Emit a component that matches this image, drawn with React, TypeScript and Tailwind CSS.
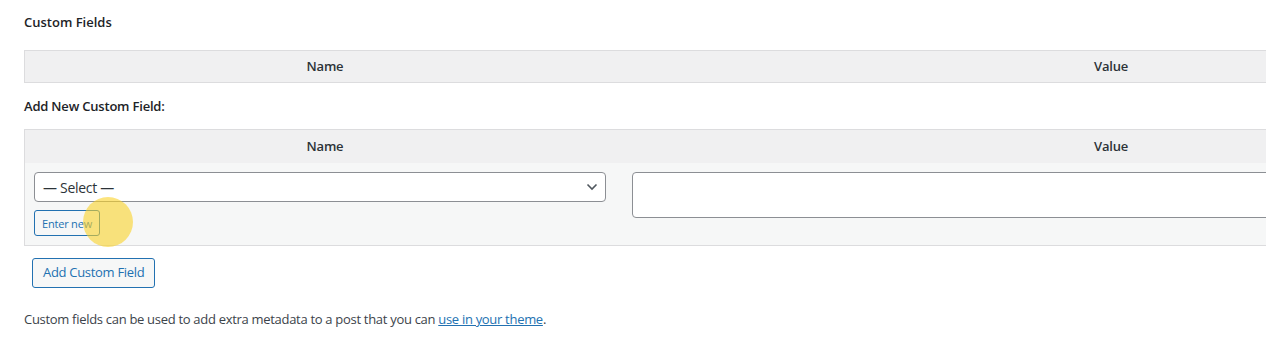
import React from "react";

export default function App() {
  return (
    <div className="w-[1266px] h-[353px] overflow-hidden bg-white text-[13px] text-[#3c434a]" style={{ fontFamily: '"Open Sans", "Noto Sans", sans-serif' }}>
      <div className="pl-6 pt-[13px]">
        <h2 className="text-[13px] font-semibold text-[#1d2327] leading-[18px]">Custom Fields</h2>
        <div className="mt-[19px] w-[1574px] border border-[#dcdcde] bg-[#f0f0f1] flex h-[33px] items-center font-semibold text-[#2c3338] tracking-[-0.2px]">
          <div className="w-[600px] text-center">Name</div>
          <div className="flex-1 text-center">Value</div>
        </div>
        <p className="mt-[14px] font-semibold text-[#1d2327] leading-[18px] tracking-[-0.2px]">Add New Custom Field:</p>
        <div className="mt-[14px] w-[1574px] border border-[#dcdcde]">
          <div className="bg-[#f0f0f1] flex h-[33px] items-center font-semibold text-[#2c3338] tracking-[-0.2px]">
            <div className="w-[600px] text-center">Name</div>
            <div className="flex-1 text-center">Value</div>
          </div>
          <div className="bg-[#f6f7f7] flex h-[82px] pt-[9px]">
            <div className="w-[600px] pl-[9px] flex flex-col items-start">
              <div className="relative w-[572px] h-[30px] rounded-[4px] border border-[#8c8f94] bg-white flex items-center pl-[8px] text-[14px] text-[#2c3338] tracking-[-0.3px]">
                — Select —
                <svg className="absolute right-[7px] top-[10px]" width="12" height="8" viewBox="0 0 12 8">
                  <path d="M1.5 1.5 L6 6 L10.5 1.5" fill="none" stroke="#50575e" strokeWidth="1.6" />
                </svg>
              </div>
              <div className="relative mt-[8px]">
                <button className="h-[26px] px-[7px] rounded-[3px] border border-[#2271b1] text-[#2271b1] text-[11px] bg-[#f6f7f7] leading-none tracking-[-0.2px]">Enter new</button>
                <div className="absolute left-[49px] top-[-13px] w-[50px] h-[50px] rounded-full bg-[rgba(250,210,40,0.6)]" />
              </div>
            </div>
            <div className="flex-1 pl-[7px]">
              <div className="w-full h-[46px] rounded-[4px] border border-[#8c8f94] bg-white" />
            </div>
          </div>
        </div>
        <button className="mt-[12px] ml-[8px] h-[30px] px-[10px] rounded-[3px] border border-[#2271b1] text-[#2271b1] text-[13px] bg-[#f6f7f7] tracking-[-0.3px]">Add Custom Field</button>
        <p className="mt-[22px] leading-[18px] text-[#3c434a] tracking-[-0.3px]">
          Custom fields can be used to add extra metadata to a post that you can{" "}
          <a href="#" className="text-[#2271b1] underline">use in your theme</a>.
        </p>
      </div>
    </div>
  );
}
